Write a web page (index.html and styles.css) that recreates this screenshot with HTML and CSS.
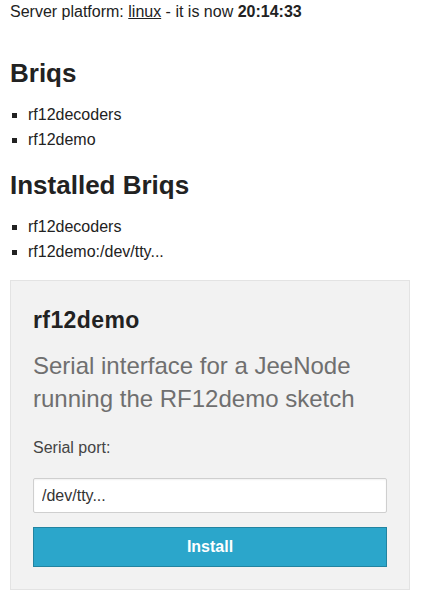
FILE: index.html
```html
<!DOCTYPE html>
<html>
<head>
<meta charset="utf-8">
<link rel="stylesheet" href="styles.css">
</head>
<body>
<p class="status">Server platform: <a class="platform" href="#">linux</a> - it is now <strong>20:14:33</strong></p>
<h2 class="title title-first">Briqs</h2>
<ul class="list">
  <li>rf12decoders</li>
  <li>rf12demo</li>
</ul>
<h2 class="title">Installed Briqs</h2>
<ul class="list">
  <li>rf12decoders</li>
  <li>rf12demo:/dev/tty...</li>
</ul>
<div class="panel">
  <h3 class="panel-title">rf12demo</h3>
  <p class="panel-desc">Serial interface for a JeeNode running the RF12demo sketch</p>
  <label class="field-label" for="port">Serial port:</label>
  <input class="field-input" id="port" type="text" value="/dev/tty...">
  <button class="btn" type="button">Install</button>
</div>
</body>
</html>
```
FILE: styles.css
```css
html, body {
  margin: 0;
  padding: 0;
  background: #fff;
}
body {
  padding: 0 10px;
  font-family: "Liberation Sans", Arial, sans-serif;
  color: #222;
  font-size: 16px;
}
.status {
  margin: 0;
  line-height: 24px;
}
.platform {
  color: #222;
  text-decoration: underline;
}
.status strong {
  font-weight: bold;
}
.title {
  margin: 17px 0 0;
  font-size: 26px;
  line-height: 32px;
  font-weight: bold;
  color: #222;
}
.title-first {
  margin-top: 33px;
}
.list {
  margin: 13px 0 0;
  padding: 0 0 0 18px;
  list-style: square;
}
.list li {
  line-height: 25px;
  font-size: 16px;
}
.panel {
  margin-top: 16px;
  width: 400px;
  box-sizing: border-box;
  background: #f2f2f2;
  border: 1px solid #e3e3e3;
  padding: 0 22px 22px;
  display: flex;
  flex-direction: column;
}
.panel-title {
  margin: 27px 0 0;
  font-size: 23px;
  line-height: 24px;
  letter-spacing: 0.4px;
  font-weight: bold;
  color: #222;
}
.panel-desc {
  margin: 17px 0 0;
  font-size: 24px;
  line-height: 33px;
  color: #6f6f6f;
}
.field-label {
  margin-top: 23px;
  font-size: 16px;
  line-height: 20px;
  color: #444;
}
.field-input {
  margin: 20px 0 0;
  height: 35px;
  box-sizing: border-box;
  border: 1px solid #cfcfcf;
  border-radius: 2px;
  background: #fff;
  padding: 0 8px;
  font-family: "Liberation Sans", Arial, sans-serif;
  font-size: 16px;
  color: #333;
  box-shadow: inset 0 1px 2px rgba(0,0,0,0.06);
}
.btn {
  margin-top: 14px;
  height: 40px;
  box-sizing: border-box;
  background: #2ba6cb;
  border: 1px solid #2284a1;
  color: #fff;
  font-family: "Liberation Sans", Arial, sans-serif;
  font-size: 16px;
  font-weight: bold;
  padding: 0;
}
```
